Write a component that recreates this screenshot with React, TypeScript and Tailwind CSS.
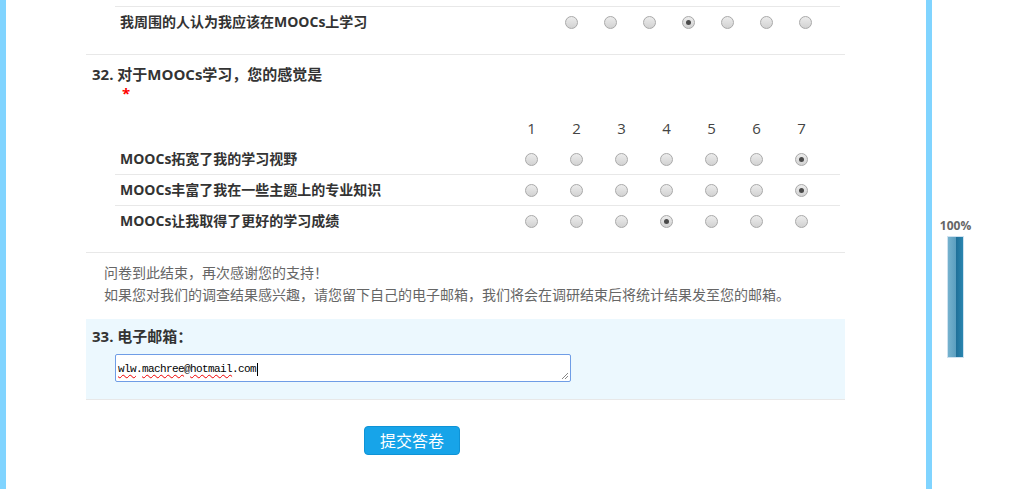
import React from 'react';

const font = { fontFamily: '"Open Sans", "Noto Sans CJK SC", sans-serif' };

function Radio({ checked }: { checked?: boolean }) {
    return (
        <span className="w-[13px] h-[13px] rounded-full border border-[#a9a9a9] bg-gradient-to-b from-[#ececec] to-[#d2d2d2] flex items-center justify-center">
            {checked && <span className="w-[5px] h-[5px] rounded-full bg-[#4a4a4a]" />}
        </span>
    );
}

function MatrixRow({ label, value, cols, border }: { label: string; value: number; cols: string; border?: boolean }) {
    return (
        <div className={`grid ${cols} h-[31px] items-center ${border ? 'border-t border-[#e8e8e8]' : 'pt-[1px]'}`}>
            <div className="pl-[5px] text-[14px] font-bold text-[#333] leading-none">{label}</div>
            {[1, 2, 3, 4, 5, 6, 7].map(n => (
                <div key={n} className="flex justify-center">
                    <Radio checked={n === value} />
                </div>
            ))}
        </div>
    );
}

const q32Rows = [
    { label: 'MOOCs拓宽了我的学习视野', value: 7 },
    { label: 'MOOCs丰富了我在一些主题上的专业知识', value: 7 },
    { label: 'MOOCs让我取得了更好的学习成绩', value: 4 },
];

export default function App() {
    return (
        <div className="w-[1017px] h-[489px] overflow-hidden bg-white flex" style={font}>
            <div className="w-[6px] bg-[#80d4ff]" />

            <div className="w-[920px] pl-[80px] pt-[6px]">
                <div className="w-[759px]">
                    {/* tail of previous question */}
                    <div className="border-b border-[#e8e8e8] pb-[17px]">
                        <div className="ml-[29px] w-[725px]">
                            <MatrixRow label="我周围的人认为我应该在MOOCs上学习" value={4} cols="grid-cols-[437px_repeat(7,39px)]" border />
                        </div>
                    </div>

                    {/* question 32 */}
                    <div className="border-b border-[#e8e8e8] pt-[8px] pb-[16px]">
                        <div className="pl-[6px] text-[15px] font-bold text-[#333] leading-[22px]">32. 对于MOOCs学习，您的感觉是</div>
                        <div className="pl-[36px] text-[15px] font-bold text-[#ff0000] leading-[16px]">*</div>
                        <div className="ml-[29px] w-[725px] mt-[12px]">
                            <div className="grid grid-cols-[394px_repeat(7,45px)] h-[30px] items-center">
                                <div />
                                {[1, 2, 3, 4, 5, 6, 7].map(n => (
                                    <div key={n} className="text-center text-[15px] text-[#444] font-normal leading-none">{n}</div>
                                ))}
                            </div>
                            {q32Rows.map((r, i) => (
                                <MatrixRow key={i} label={r.label} value={r.value} cols="grid-cols-[394px_repeat(7,45px)]" border={i > 0} />
                            ))}
                        </div>
                    </div>

                    {/* closing text */}
                    <div className="pl-[18px] pt-[9px] pb-[13px] text-[14px] text-[#666] leading-[22px]">
                        <p>问卷到此结束，再次感谢您的支持！</p>
                        <p>如果您对我们的调查结果感兴趣，请您留下自己的电子邮箱，我们将会在调研结束后将统计结果发至您的邮箱。</p>
                    </div>

                    {/* question 33 */}
                    <div className="bg-[#ecf8fe] border-b border-[#e8e8e8] pt-[6px] pb-[17px]">
                        <div className="pl-[6px] text-[15px] font-bold text-[#333] leading-[22px]">33. 电子邮箱：</div>
                        <div className="relative ml-[29px] mt-[7px] w-[456px] h-[28px] bg-white border border-[#6f9de6] rounded-[2px] flex items-center pl-[2px] pt-[3px]">
                            <span className="text-[11px] tracking-[-0.6px] text-black leading-none" style={{ fontFamily: '"Liberation Mono", monospace' }}>
                                <span className="underline decoration-wavy decoration-[#e00] decoration-1 underline-offset-2">wlw</span>.
                                <span className="underline decoration-wavy decoration-[#e00] decoration-1 underline-offset-2">machree</span>@
                                <span className="underline decoration-wavy decoration-[#e00] decoration-1 underline-offset-2">hotmail</span>.com
                            </span>
                            <span className="w-px h-[13px] bg-black ml-[1px]" />
                            <svg className="absolute right-[1px] bottom-[1px]" width="8" height="8" viewBox="0 0 8 8">
                                <path d="M7 1 L1 7 M7 4 L4 7" stroke="#888" strokeWidth="1" />
                            </svg>
                        </div>
                    </div>

                    <div className="pl-[278px] pt-[26px]">
                        <button className="w-[96px] h-[29px] bg-[#17a4e9] border border-[#0f93d6] rounded-[4px] text-white text-[16px] leading-none">
                            提交答卷
                        </button>
                    </div>
                </div>
            </div>

            <div className="w-[6px] bg-[#80d4ff]" />

            <div className="flex-1 pt-[219px] pl-[7px]">
                <div className="w-[33px] text-center text-[12px] font-bold text-[#666] leading-[14px]">100%</div>
                <div className="ml-[8px] mt-[3px] w-[17px] h-[122px] border border-[#cfe2f0] flex">
                    <div className="flex-1 bg-gradient-to-r from-[#75b2ce] to-[#5b9ebf]" />
                    <div className="flex-1 bg-gradient-to-r from-[#1f6f98] to-[#2a86b0]" />
                </div>
            </div>
        </div>
    );
}
